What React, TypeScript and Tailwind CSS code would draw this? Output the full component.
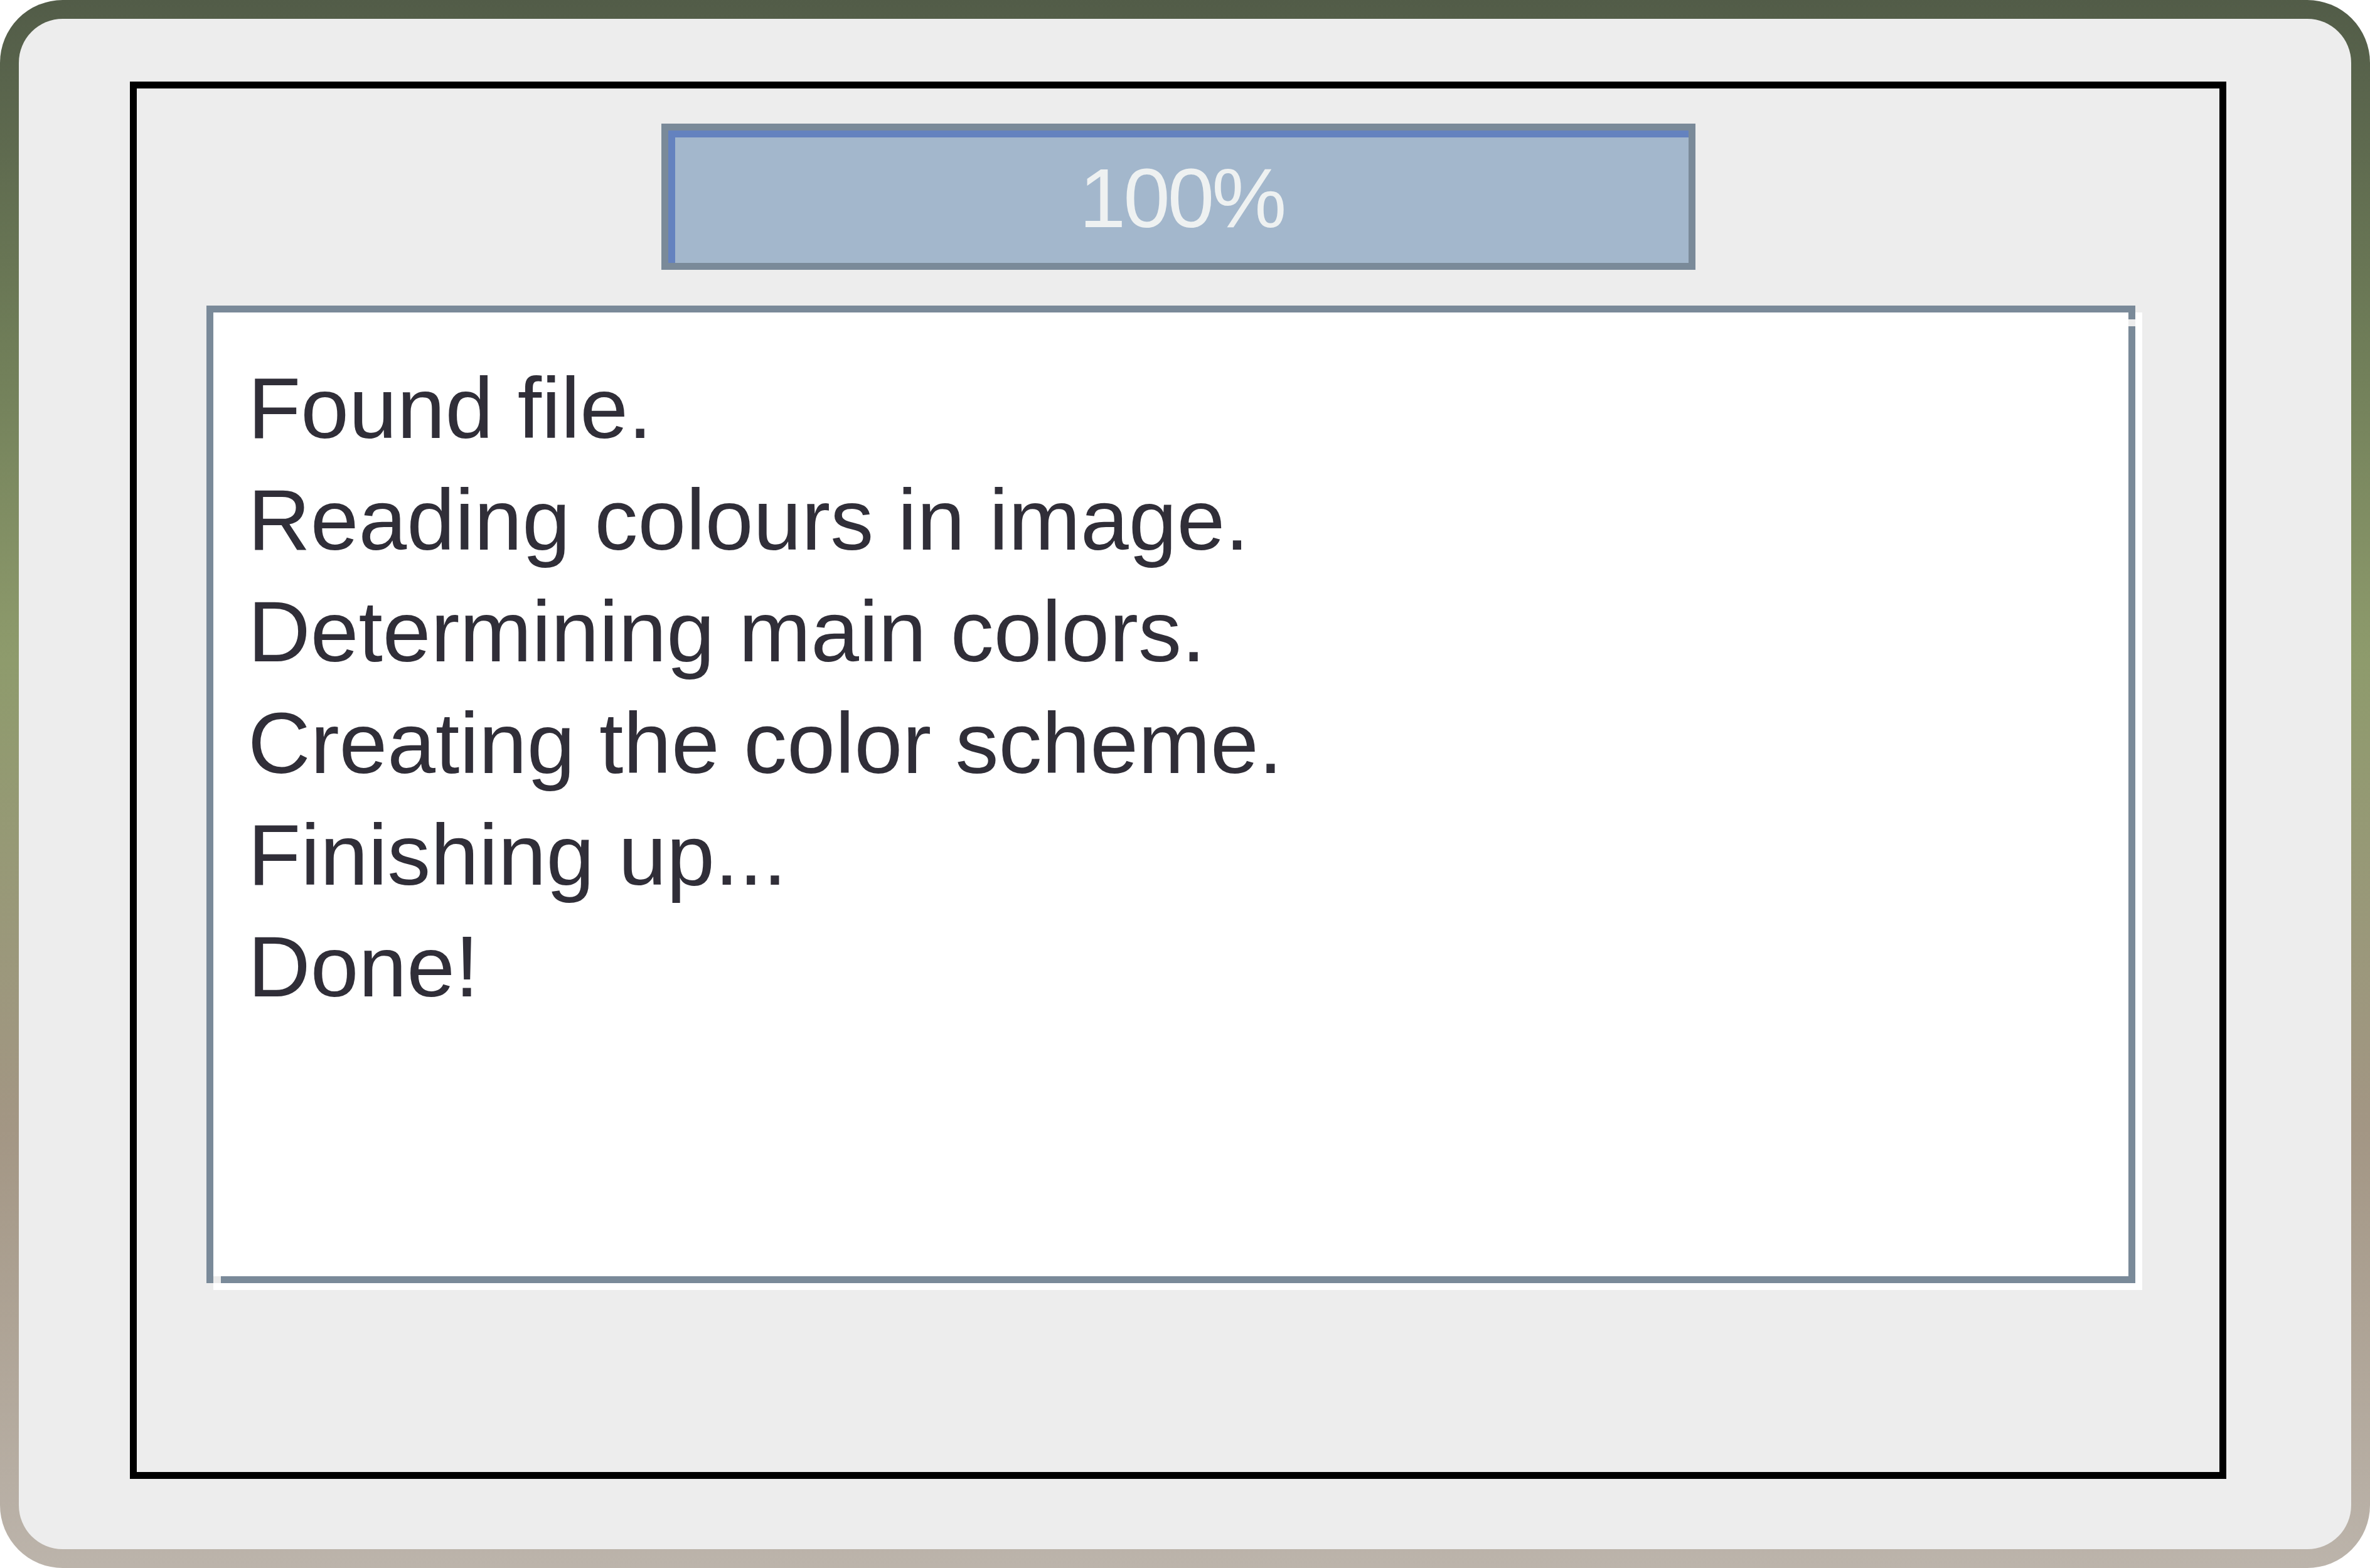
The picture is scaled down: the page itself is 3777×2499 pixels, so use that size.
const lines = [
  "Found file.",
  "Reading colours in image.",
  "Determining main colors.",
  "Creating the color scheme.",
  "Finishing up...",
  "Done!",
];

function ProgressBar({ label }: { label: string }) {
  return (
    <div className="self-center w-[1648px] h-[233px] border-[11px] border-[#7a8a99]">
      <div className="h-full border-t-[11px] border-l-[11px] border-[#6482bf] bg-[#a3b7cc] flex items-center justify-center pb-[7px]">
        <span className="text-[134px] leading-none tracking-[-4px] text-[#eef1f1]">{label}</span>
      </div>
    </div>
  );
}

function LogBox() {
  return (
    <div className="relative mt-[57px] ml-[111px] w-[3074px] h-[1558px] border-[11px] border-[#7a8a99] bg-white shadow-[11px_11px_0_0_#ffffff] pt-[63px] pl-[55px]">
      {lines.map((line) => (
        <div key={line} className="text-[138px] leading-[178px] text-[#302e38] whitespace-pre">
          {line}
        </div>
      ))}
      {/* little gaps in the sunken frame */}
      <span className="absolute left-0 -bottom-[11px] w-[12px] h-[11px] bg-[#ebebeb]" />
      <span className="absolute -right-[11px] top-[11px] w-[11px] h-[11px] bg-[#ededed]" />
    </div>
  );
}

export default function App() {
  return (
    <div
      className="w-[3777px] h-[2499px] p-[30px] rounded-[100px] bg-[linear-gradient(to_bottom,#525c48_0%,#6f7d58_22%,#8e9b6c_42%,#a39684_72%,#bcb4ab_100%)]"
      style={{ fontFamily: '"Liberation Sans", Arial, sans-serif' }}
    >
      <div className="h-full bg-[#ededed] rounded-[70px] pt-[100px] pl-[177px]">
        <div className="w-[3341px] h-[2227px] border-[11px] border-black flex flex-col pt-[56px]">
          <ProgressBar label="100%" />
          <LogBox />
        </div>
      </div>
    </div>
  );
}
